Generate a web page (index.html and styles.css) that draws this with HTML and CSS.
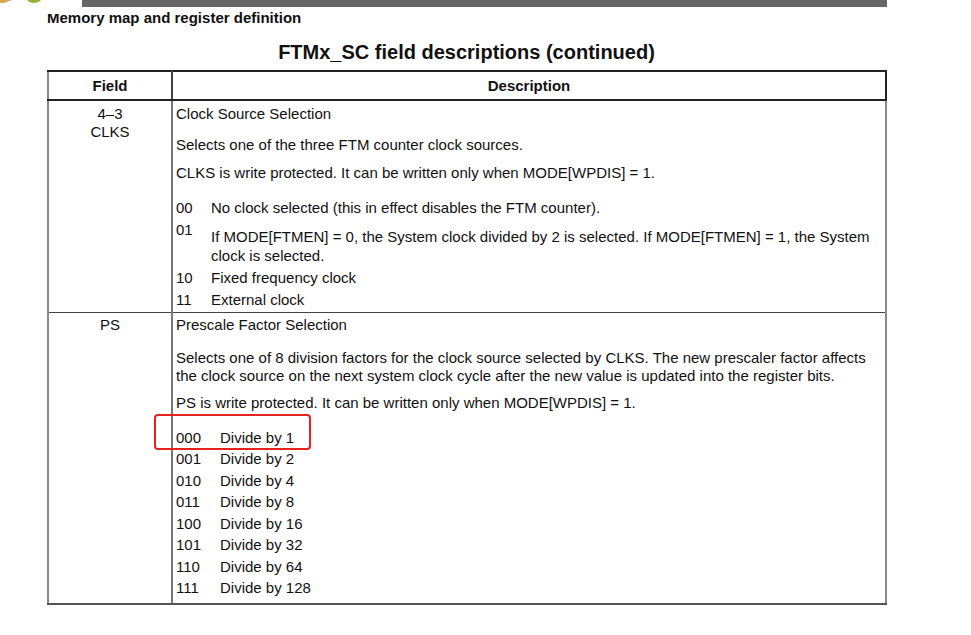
FILE: index.html
```html
<!DOCTYPE html>
<html>
<head>
<meta charset="utf-8">
<link rel="stylesheet" href="styles.css">
</head>
<body>
<div class="page">
  <div class="topbar"></div>
  <div class="section-title">Memory map and register definition</div>
  <div class="corner">
    <svg width="82" height="15" viewBox="0 0 82 15">
      <ellipse cx="3" cy="-3" rx="7" ry="6" fill="#d9a349"/>
      <ellipse cx="10" cy="-4" rx="3" ry="5" fill="#8aa7bf"/>
      <ellipse cx="34" cy="-3" rx="8" ry="6" fill="#93b43a"/>
    </svg>
  </div>
  <h1 class="table-title">FTMx_SC field descriptions (continued)</h1>
  <table class="fields">
    <thead>
      <tr><th class="col-field">Field</th><th class="col-desc">Description</th></tr>
    </thead>
    <tbody>
      <tr class="row-clks">
        <td class="field">4–3<br>CLKS</td>
        <td class="desc">
          <p class="p-first">Clock Source Selection</p>
          <p class="p-a">Selects one of the three FTM counter clock sources.</p>
          <p class="p-b">CLKS is write protected. It can be written only when MODE[WPDIS] = 1.</p>
          <div class="vals vals-2">
            <div class="code">00</div><div class="val">No clock selected (this in effect disables the FTM counter).</div>
            <div class="code">01</div><div class="val val-multi">If MODE[FTMEN] = 0, the System clock divided by 2 is selected. If MODE[FTMEN] = 1, the System clock is selected.</div>
            <div class="code">10</div><div class="val">Fixed frequency clock</div>
            <div class="code">11</div><div class="val">External clock</div>
          </div>
        </td>
      </tr>
      <tr class="row-ps">
        <td class="field">PS</td>
        <td class="desc">
          <p class="p-first">Prescale Factor Selection</p>
          <p class="p-c">Selects one of 8 division factors for the clock source selected by CLKS. The new prescaler factor affects the clock source on the next system clock cycle after the new value is updated into the register bits.</p>
          <p class="p-d">PS is write protected. It can be written only when MODE[WPDIS] = 1.</p>
          <div class="vals vals-3">
            <div class="code hl-anchor">000<span class="highlight"></span></div><div class="val">Divide by 1</div>
            <div class="code">001</div><div class="val">Divide by 2</div>
            <div class="code">010</div><div class="val">Divide by 4</div>
            <div class="code">011</div><div class="val">Divide by 8</div>
            <div class="code">100</div><div class="val">Divide by 16</div>
            <div class="code">101</div><div class="val">Divide by 32</div>
            <div class="code">110</div><div class="val">Divide by 64</div>
            <div class="code">111</div><div class="val">Divide by 128</div>
          </div>
        </td>
      </tr>
    </tbody>
  </table>
</div>
</body>
</html>
```

FILE: styles.css
```css
* { box-sizing: border-box; }
html, body { margin: 0; padding: 0; background: #fff; }
body {
  font-family: "Liberation Sans", Arial, sans-serif;
  color: #111;
  width: 971px;
  height: 635px;
  overflow: hidden;
}
.page { position: relative; }
.topbar {
  margin-left: 82px;
  width: 805px;
  height: 7px;
  background: #666;
}
.section-title {
  margin: 2px 0 0 47px;
  font-weight: bold;
  font-size: 15px;
  line-height: 18px;
}
.corner {
  position: absolute;
  left: 0;
  top: 0;
  width: 82px;
  height: 14px;
  background: #fff;
}
.corner svg { display: block; }
.table-title {
  margin: 14px 0 0 0;
  width: 933px;
  text-align: center;
  font-size: 20px;
  line-height: 22px;
  font-weight: bold;
}
.fields {
  margin: 7px 0 0 47px;
  width: 840px;
  border-collapse: collapse;
  font-size: 15px;
}
.fields th {
  font-weight: bold;
  height: 29px;
  padding: 0;
  border-top: 2px solid #222;
  border-bottom: 2px solid #222;
  line-height: 18px;
  vertical-align: middle;
  text-align: center;
}
.col-field { width: 124px; border-left: 2px solid #888; border-right: 2px solid #444; }
.col-desc { border-right: 2px solid #222; }
.fields td {
  vertical-align: top;
  padding: 0;
}
.field {
  text-align: center;
  line-height: 18px;
  padding-top: 4px !important;
  border-left: 2px solid #888;
  border-right: 2px solid #777;
}
.row-clks td { border-bottom: 1px solid #444; }
.row-ps td { border-bottom: 2px solid #555; }
.row-ps .field { padding-top: 3px !important; }
.desc {
  border-right: 2px solid #888;
  padding: 4px 8px 0 3px !important;
}
.row-ps .desc { padding-top: 3px !important; }
.desc p { margin: 0; line-height: 18px; }
.p-a { margin-top: 13px !important; }
.p-b { margin-top: 10px !important; }
.p-c { margin-top: 15px !important; }
.p-d { margin-top: 9px !important; }
.vals {
  display: grid;
}
.vals-2 {
  grid-template-columns: 35px 1fr;
  line-height: 22px;
  margin-top: 15px;
  padding-bottom: 1px;
}
.val-multi { line-height: 19px; padding-top: 7.5px; padding-bottom: 2px; }
.vals-3 {
  grid-template-columns: 44px 1fr;
  line-height: 21.5px;
  margin-top: 15px;
  padding-bottom: 4px;
}
.hl-anchor { position: relative; }
.highlight {
  position: absolute;
  left: -22px;
  top: -13px;
  width: 157px;
  height: 36px;
  border: 2px solid #e3221f;
  border-radius: 4px;
}
```
